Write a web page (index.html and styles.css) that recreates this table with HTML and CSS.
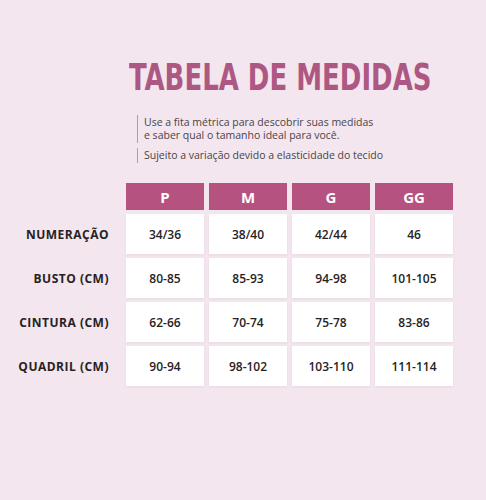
FILE: index.html
```html
<!DOCTYPE html>
<html lang="pt">
<head>
    <meta charset="UTF-8">
    <meta name="viewport" content="width=device-width, initial-scale=1.0">
    <title>Tabela de Medidas</title>
    <link rel="stylesheet" href="styles.css">
</head>
<body>
    <div class="page">
        <h1 class="title"><span>TABELA DE MEDIDAS</span></h1>

        <div class="notes">
            <p class="note">Use a fita métrica para descobrir suas medidas<br>e saber qual o tamanho ideal para você.</p>
            <p class="note">Sujeito a variação devido a elasticidade do tecido</p>
        </div>

        <div class="sizes">
            <div class="corner"></div>
            <div class="head">P</div>
            <div class="head">M</div>
            <div class="head">G</div>
            <div class="head">GG</div>

            <div class="label">NUMERAÇÃO</div>
            <div class="cell">34/36</div>
            <div class="cell">38/40</div>
            <div class="cell">42/44</div>
            <div class="cell">46</div>

            <div class="label">BUSTO (CM)</div>
            <div class="cell">80-85</div>
            <div class="cell">85-93</div>
            <div class="cell">94-98</div>
            <div class="cell">101-105</div>

            <div class="label">CINTURA (CM)</div>
            <div class="cell">62-66</div>
            <div class="cell">70-74</div>
            <div class="cell">75-78</div>
            <div class="cell">83-86</div>

            <div class="label">QUADRIL (CM)</div>
            <div class="cell">90-94</div>
            <div class="cell">98-102</div>
            <div class="cell">103-110</div>
            <div class="cell">111-114</div>
        </div>
    </div>
</body>
</html>
```

FILE: styles.css
```css
:root {
    --bg: #f3e6ee;
    --rose: #b5527f;
    --title: #ad5883;
    --ink: #262224;
    --note: #4a4448;
}

body {
    margin: 0;
    background: var(--bg);
    font-family: 'Open Sans', 'DejaVu Sans', sans-serif;
    color: var(--ink);
}

.page {
    width: 486px;
    height: 500px;
    padding-top: 58px;
    box-sizing: border-box;
    overflow: hidden;
}

.title {
    margin: 0 0 0 129px;
    font-family: 'DejaVu Sans Condensed', 'DejaVu Sans', sans-serif;
    font-stretch: condensed;
    font-weight: 700;
    font-size: 38px;
    line-height: 38px;
    color: var(--title);
    white-space: nowrap;
}

/* the original uses a narrow display face, squeeze ours to match */
.title span {
    display: inline-block;
    transform: scaleX(0.76);
    transform-origin: left center;
}

.notes {
    margin: 19px 0 0 137px;
}

.note {
    margin: 0 0 5px;
    padding: 1px 0 1px 6px;
    border-left: 1.5px solid #c592ac;
    font-size: 10.5px;
    line-height: 13px;
    color: var(--note);
}

.sizes {
    display: grid;
    grid-template-columns: 121px repeat(4, 78px);
    grid-template-rows: 27px repeat(4, 40px);
    column-gap: 5px;
    row-gap: 4px;
    margin-top: 20px;
}

.head {
    background: var(--rose);
    color: #fff;
    font-weight: 700;
    font-size: 15px;
    display: flex;
    align-items: center;
    justify-content: center;
}

.label {
    display: flex;
    align-items: center;
    justify-content: flex-end;
    padding-right: 12px;
    font-weight: 700;
    font-size: 12px;
    letter-spacing: 0.5px;
}

.cell {
    background: #fff;
    display: flex;
    align-items: center;
    justify-content: center;
    font-weight: 600;
    font-size: 12px;
    box-shadow: 0 1px 2px rgba(120, 60, 90, 0.08);
}
```
